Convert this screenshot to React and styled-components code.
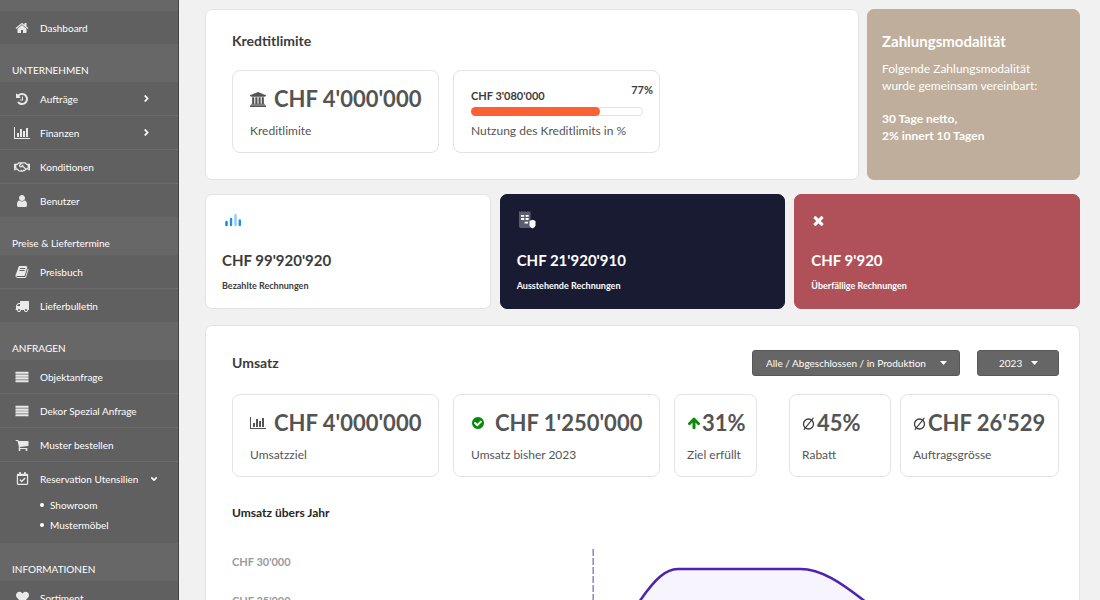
import React from 'react';
import styled, { createGlobalStyle } from 'styled-components';
import {
  FaAngleDown,
  FaAngleRight,
  FaHeart,
  FaRegCalendarCheck,
  FaRegHandshake,
} from 'react-icons/fa';

const palette = {
  sidebar: '#676767',
  item: '#606060',
  page: '#f1f1f1',
  border: '#e3e3e3',
  text: '#3c3c3c',
  value: '#545454',
  muted: '#9b9b9b',
  orange: '#fb6233',
  green: '#0a8a0a',
  navy: '#181b32',
  red: '#b05159',
  sand: '#beae9b',
  purple: '#4b24b4',
};

const GlobalStyle = createGlobalStyle`
  * {
    box-sizing: border-box;
  }
  body {
    margin: 0;
    background: ${palette.page};
    color: ${palette.text};
    font-family: Lato, 'Open Sans', sans-serif;
    font-size: 12px;
  }
  h2, h3, p, ul {
    margin: 0;
    padding: 0;
  }
  ul {
    list-style: none;
  }
`;

/* icons */

const paths = {
  home:
    'M1472 992v480q0 26-19 45t-45 19h-384v-384h-256v384h-384q-26 0-45-19t-19-45v-480q0-1 .5-3t.5-3l575-474 575 474q1 2 1 6zm223-69l-62 74q-8 9-21 11h-3q-13 0-21-7l-692-577-692 577q-12 8-24 7-13-2-21-11l-62-74q-8-10-7-23.5t11-21.5l719-599q32-26 76-26t76 26l244 204v-195q0-14 9-23t23-9h192q14 0 23 9t9 23v408l219 182q10 8 11 21.5t-7 23.5z',
  history:
    'M1664 896q0 156-61 298t-164 245-245 164-298 61q-172 0-327-72.5t-264-204.5q-7-10-6.5-22.5t8.5-20.5l137-138q10-9 25-9 16 2 23 12 73 95 179 147t225 52q104 0 198.5-40.5t163.5-109.5 109.5-163.5 40.5-198.5-40.5-198.5-109.5-163.5-163.5-109.5-198.5-40.5q-98 0-188 35.5t-160 101.5l137 138q31 30 14 69-17 40-59 40h-448q-26 0-45-19t-19-45v-448q0-42 40-59 39-17 69 14l130 129q107-101 244.5-156.5t284.5-55.5q156 0 298 61t245 164 164 245 61 298zm-640-288v448q0 14-9 23t-23 9h-320q-14 0-23-9t-9-23v-64q0-14 9-23t23-9h224v-352q0-14 9-23t23-9h64q14 0 23 9t9 23z',
  chart:
    'M640 896v512h-256v-512h256zm384-512v1024h-256v-1024h256zm1024 1152v128h-2048v-1536h128v1408h1920zm-640-896v768h-256v-768h256zm384-384v1152h-256v-1152h256z',
  user:
    'M1536 1399q0 109-62.5 187t-150.5 78h-854q-88 0-150.5-78t-62.5-187q0-85 8.5-160.5t31.5-152 58.5-131 94-89 134.5-34.5q131 128 313 128t313-128q76 0 134.5 34.5t94 89 58.5 131 31.5 152 8.5 160.5zm-256-887q0 159-112.5 271.5t-271.5 112.5-271.5-112.5-112.5-271.5 112.5-271.5 271.5-112.5 271.5 112.5 112.5 271.5z',
  book:
    'M1703 478q40 57 18 129l-275 906q-19 64-76.5 107.5t-122.5 43.5h-923q-77 0-148.5-53.5t-99.5-131.5q-24-67-2-127 0-4 3-27t4-37q1-8-3-21.5t-3-19.5q2-11 8-21t16.5-23.5 16.5-23.5q23-38 45-91.5t30-91.5q3-10 .5-30t-.5-28q3-11 17-28t17-23q21-36 42-92t25-90q1-9-2.5-32t.5-28q4-13 22-30.5t22-22.5q19-26 42.5-84.5t27.5-96.5q1-8-3-25.5t-2-26.5q2-8 9-18t18-23 17-21q8-12 16.5-30.5t15-35 16-36 19.5-32 26.5-23.5 36-11.5 47.5 5.5l-1 3q38-9 51-9h761q74 0 114 56t18 130l-274 906q-36 119-71.5 153.5t-128.5 34.5h-869q-27 0-38 15-11 16-1 43 24 70 144 70h923q29 0 56-15.5t35-41.5l300-987q7-22 5-57 38 15 59 43zm-1064 2q-4 13 2 22.5t20 9.5h608q13 0 25.5-9.5t16.5-22.5l21-64q4-13-2-22.5t-20-9.5h-608q-13 0-25.5 9.5t-16.5 22.5zm-83 256q-4 13 2 22.5t20 9.5h608q13 0 25.5-9.5t16.5-22.5l21-64q4-13-2-22.5t-20-9.5h-608q-13 0-25.5 9.5t-16.5 22.5z',
  truck:
    'M640 1408q0-52-38-90t-90-38-90 38-38 90 38 90 90 38 90-38 38-90zm-384-512h384v-256h-158q-13 0-22 9l-195 195q-9 9-9 22v30zm1280 512q0-52-38-90t-90-38-90 38-38 90 38 90 90 38 90-38 38-90zm256-1088v1024q0 15-4 26.5t-13.5 18.5-16.5 11.5-23.5 6-22.5 2-25.5 0-22.5-.5q0 106-75 181t-181 75-181-75-75-181h-384q0 106-75 181t-181 75-181-75-75-181h-64q-3 0-22.5.5t-25.5 0-22.5-2-23.5-6-16.5-11.5-13.5-18.5-4-26.5q0-26 19-45t45-19v-320q0-8-.5-35t0-38 2.5-34.5 6.5-37 14-30.5 22.5-30l198-198q19-19 50.5-32t58.5-13h160v-192q0-26 19-45t45-19h1024q26 0 45 19t19 45z',
  list:
    'M64 216h1664v270H64zm0 363h1664v270H64zm0 363h1664v270H64zm0 363h1664v270H64z',
  cart:
    'M704 1536q0 52-38 90t-90 38-90-38-38-90 38-90 90-38 90 38 38 90zm896 0q0 52-38 90t-90 38-90-38-38-90 38-90 90-38 90 38 38 90zm128-1088v512q0 24-16.5 42.5t-40.5 21.5l-1044 122q13 60 13 70 0 16-24 64h920q26 0 45 19t19 45-19 45-45 19h-1024q-26 0-45-19t-19-45q0-11 8-31.5t16-36 21.5-40 15.5-29.5l-177-823h-204q-26 0-45-19t-19-45 19-45 45-19h256q16 0 28.5 6.5t19.5 15.5 13 24.5 8 26 5.5 29.5 4.5 26h1201q26 0 45 19t19 45z',
  bank:
    'M960 0l960 384v128h-128q0 26-20.5 45t-48.5 19h-1526q-28 0-48.5-19t-20.5-45h-128v-128zm-704 640h256v768h128v-768h256v768h128v-768h256v768h128v-768h256v768h59q28 0 48.5 19t20.5 45v64h-1664v-64q0-26 20.5-45t48.5-19h59v-768zm1595 960q28 0 48.5 19t20.5 45v128h-1920v-128q0-26 20.5-45t48.5-19h1782z',
  check:
    'M1412 734q0-28-18-46l-91-90q-19-19-45-19t-45 19l-408 407-226-226q-19-19-45-19t-45 19l-91 90q-18 18-18 46 0 27 18 45l362 362q19 19 45 19 27 0 46-19l543-543q18-18 18-45zm252 162q0 209-103 385.5t-279.5 279.5-385.5 103-385.5-103-279.5-279.5-103-385.5 103-385.5 279.5-279.5 385.5-103 385.5 103 279.5 279.5 103 385.5z',
  up:
    'M1675 971q0 51-37 90l-75 75q-38 38-91 38-54 0-90-38l-294-293v704q0 52-37.5 84.5t-90.5 32.5h-128q-53 0-90.5-32.5t-37.5-84.5v-704l-294 293q-36 38-90 38t-90-38l-75-75q-38-38-38-90 0-53 38-91l651-651q35-37 90-37 54 0 91 37l651 651q37 39 37 91z',
  times:
    'M1490 1322q0 40-28 68l-136 136q-28 28-68 28t-68-28l-294-294-294 294q-28 28-68 28t-68-28l-136-136q-28-28-28-68t28-68l294-294-294-294q-28-28-28-68t28-68l136-136q28-28 68-28t68 28l294 294 294-294q28-28 68-28t68 28l136 136q28 28 28 68t-28 68l-294 294 294 294q28 28 28 68z',
};

const Icon = ({ name, size = 14, wide, color = 'currentColor' }) => {
  const box = wide || 1792;
  return (
    <svg
      width={Math.round((size * box) / 1792)}
      height={size}
      viewBox={`0 0 ${box} 1792`}
      fill={color}
      aria-hidden="true"
    >
      <path d={paths[name]} />
    </svg>
  );
};

const AverageIcon = () => (
  <svg width="13" height="16" viewBox="0 0 13 16" fill="none" stroke="#3c3c3c" aria-hidden="true">
    <circle cx="6.5" cy="9" r="5" strokeWidth="1.3" />
    <path d="M1.800 14.800L11.400 2.800" strokeWidth="1.1" />
  </svg>
);

const BarsIcon = () => (
  <svg width="18" height="18" viewBox="0 0 18 18" strokeWidth="2.4" strokeLinecap="round" aria-hidden="true">
    <path d="M2.5 11v3" stroke="#1c7fc4" />
    <path d="M7 8v6" stroke="#2490d8" />
    <path d="M11.5 4v10" stroke="#8dcbf6" />
    <path d="M15.8 9.500v4.500" stroke="#2490d8" />
  </svg>
);

const InvoiceIcon = () => (
  <svg width="18" height="18" viewBox="0 0 18 18" aria-hidden="true">
    <path d="M0 0l1.500 1L3 0l1.500 1L6 0l1.500 1L9 0l1.500 1L11.500 0v17H2Q0 17 0 15z" fill="#5a5c70" />
    <path d="M2 4.800h3.200M6.600 4.800h3M2 8h3.200M6.600 8h3M5.600 11.600h3.400" stroke="#fff" strokeWidth="1.8" />
    <path d="M10.500 10l3-1.300 3 1.300v4.300q0 2-3 3.200-3-1.200-3-3.200z" fill="#fff" />
  </svg>
);

/* page shell */

const Layout = styled.div`
  display: flex;
  height: 100vh;
  overflow: hidden;
`;

const Sidebar = styled.nav`
  flex: 0 0 179px;
  padding-top: 11px;
  overflow: hidden;
  background: ${palette.sidebar};
  border-right: 1px solid #454545;
  color: white;
  font-size: 10px;
`;

const Main = styled.main`
  flex: 1;
  min-width: 0;
  padding: 9px 20px 20px 26px;
  overflow: hidden;
`;

const NavHeading = styled.h3`
  padding: 18px 12px 4px;
  font-size: 10px;
  line-height: 16px;
  font-weight: 400;
`;

const NavList = styled.ul`
  background: ${palette.item};
`;

const NavItem = styled.li`
  & + & {
    border-top: 1px solid #6b6b6b;
  }
`;

const NavLink = styled.a`
  display: flex;
  align-items: center;
  height: 33px;
  padding-left: 12px;
  color: white;
  text-decoration: none;
  white-space: nowrap;
`;

const NavIcon = styled.span`
  display: flex;
  justify-content: center;
  width: 20px;
  margin-right: 8px;
  color: #e9e9e9;
`;

const NavArrow = styled.span`
  display: flex;
  margin: 0 ${(props) => (props.$open ? 19 : 26)}px 0 auto;
`;

const SubList = styled.ul`
  padding: 0 0 8px 40px;
`;

const SubItem = styled.li`
  a {
    display: flex;
    align-items: center;
    gap: 6px;
    line-height: 20px;
    color: white;
    text-decoration: none;
  }
  a::before {
    content: '';
    width: 4px;
    height: 4px;
    border-radius: 50%;
    background: white;
  }
`;

/* cards */

const Card = styled.section`
  background: white;
  border: 1px solid ${palette.border};
  border-radius: 7px;
`;

const TopRow = styled.div`
  display: grid;
  grid-template-columns: 1fr 213px;
  gap: 8px;
  margin-bottom: 14px;
`;

const LimitCard = styled(Card)`
  padding: 21px 26px 26px;
`;

const CardTitle = styled.h2`
  font-size: 14px;
  line-height: 20px;
  font-weight: 700;
`;

const LimitTitle = styled(CardTitle)`
  margin-bottom: 19px;
`;

const PaymentCard = styled(Card)`
  padding: 21px 14px;
  background: ${palette.sand};
  border-color: ${palette.sand};
  color: white;
  line-height: 17px;

  h2 {
    font-size: 15px;
  }
  p {
    margin-top: 9px;
  }
  p + p {
    margin-top: 16px;
    font-weight: 700;
  }
`;

const StatRow = styled.div`
  display: flex;
  gap: ${(props) => props.$gap || 14}px;
`;

const StatBox = styled.div`
  flex: 0 0 ${(props) => props.$width}px;
  height: 83px;
  padding: 14px 6px 0 ${(props) => (props.$tight ? 12 : 17)}px;
  border: 1px solid ${palette.border};
  border-radius: 8px;
  white-space: nowrap;
`;

const StatValue = styled.div`
  display: flex;
  align-items: center;
  gap: ${(props) => props.$gap}px;
  line-height: 28px;
  font-size: 22px;
  font-weight: 700;
  color: ${palette.value};
`;

const StatLabel = styled.div`
  margin-top: ${(props) => (props.$close ? 6 : 9)}px;
  line-height: 18px;
  color: #555;
`;

const UsageHead = styled.div`
  display: flex;
  justify-content: space-between;
  align-items: flex-start;
  height: 22px;
  font-size: 11px;
  line-height: 10px;
  font-weight: 700;

  span:first-child {
    align-self: center;
  }
`;

const Progress = styled.div`
  height: 9px;
  margin-right: 10px;
  border-radius: 5px;
  box-shadow: inset 0 0 0 1px ${palette.border};
`;

const ProgressFill = styled.div`
  height: 100%;
  border-radius: 5px;
  background: ${palette.orange};
`;

const InvoiceRow = styled.div`
  display: grid;
  grid-template-columns: repeat(3, 1fr);
  gap: 9px;
  margin-bottom: 16px;
`;

const InvoiceCard = styled(Card)`
  padding: 15px 16px 14px;
  background: ${(props) => props.$bg || 'white'};
  border-color: ${(props) => props.$bg || palette.border};
  color: ${(props) => (props.$bg ? 'white' : palette.text)};
`;

const InvoiceIconBox = styled.div`
  display: flex;
  align-items: center;
  height: 20px;
  padding-left: ${(props) => props.$indent || 0}px;
`;

const InvoiceValue = styled.div`
  margin-top: 20px;
  font-size: 15px;
  line-height: 20px;
  font-weight: 700;
`;

const InvoiceLabel = styled.div`
  margin-top: 8px;
  font-size: 9px;
  line-height: 16px;
  font-weight: 700;
`;

const RevenueCard = styled(Card)`
  padding: 24px 20px 26px 26px;
`;

const RevenueHead = styled.div`
  display: flex;
  align-items: center;
  margin-bottom: 18px;

  h2 {
    margin-right: auto;
  }
`;

const SelectWrapper = styled.div`
  position: relative;
  width: ${(props) => props.$width}px;
  margin-left: 17px;

  svg {
    position: absolute;
    top: 11px;
    right: ${(props) => props.$caret}px;
    pointer-events: none;
  }
`;

const Select = styled.select`
  display: block;
  width: 100%;
  height: 26px;
  padding: 0 0 0 ${(props) => props.$indent}px;
  appearance: none;
  border: 1px solid #585858;
  border-radius: 3px;
  background: #666;
  color: white;
  font-family: inherit;
  font-size: 10px;
`;

const SplitRow = styled.div`
  display: flex;
  justify-content: space-between;
`;

/* chart */

const ChartTitle = styled.h3`
  margin-top: 26px;
  font-size: 12px;
  line-height: 20px;
  color: #262626;
`;

const Chart = styled.div`
  display: flex;
  margin-top: 26px;
`;

const Axis = styled.ul`
  flex: 0 0 68px;
  padding-top: 4px;
  color: ${palette.muted};
  font-size: 11px;
  font-weight: 700;
  line-height: 18px;

  li {
    margin-bottom: 21px;
  }
`;

const Plot = styled.svg`
  flex: 1;
  min-width: 0;
  height: 240px;
`;

const Caret = () => (
  <svg width="7" height="4" viewBox="0 0 8 5" preserveAspectRatio="none" fill="#fff" aria-hidden="true">
    <path d="M0 0h8L4 5z" />
  </svg>
);

const Dropdown = ({ label, options, width, caret, indent }) => (
  <SelectWrapper $width={width} $caret={caret}>
    <Select aria-label={label} $indent={indent}>
      {options.map((option) => (
        <option key={option}>{option}</option>
      ))}
    </Select>
    <Caret />
  </SelectWrapper>
);

const menu = [
  { items: [{ text: 'Dashboard', icon: <Icon name="home" /> }] },
  {
    title: 'UNTERNEHMEN',
    items: [
      { text: 'Aufträge', icon: <Icon name="history" />, arrow: true },
      { text: 'Finanzen', icon: <Icon name="chart" wide={2048} />, arrow: true },
      { text: 'Konditionen', icon: <FaRegHandshake size={16} /> },
      { text: 'Benutzer', icon: <Icon name="user" /> },
    ],
  },
  {
    title: 'Preise & Liefertermine',
    items: [
      { text: 'Preisbuch', icon: <Icon name="book" /> },
      { text: 'Lieferbulletin', icon: <Icon name="truck" /> },
    ],
  },
  {
    title: 'ANFRAGEN',
    items: [
      { text: 'Objektanfrage', icon: <Icon name="list" /> },
      { text: 'Dekor Spezial Anfrage', icon: <Icon name="list" /> },
      { text: 'Muster bestellen', icon: <Icon name="cart" /> },
      {
        text: 'Reservation Utensilien',
        icon: <FaRegCalendarCheck size={13} />,
        children: ['Showroom', 'Mustermöbel'],
      },
    ],
  },
  {
    title: 'INFORMATIONEN',
    items: [{ text: 'Sortiment', icon: <FaHeart size={13} /> }],
  },
];

const MenuEntry = ({ item }) => (
  <NavItem>
    <NavLink href="#">
      <NavIcon>{item.icon}</NavIcon>
      {item.text}
      {item.arrow && (
        <NavArrow>
          <FaAngleRight size={11} />
        </NavArrow>
      )}
      {item.children && (
        <NavArrow $open>
          <FaAngleDown size={10} />
        </NavArrow>
      )}
    </NavLink>
    {item.children && (
      <SubList>
        {item.children.map((child) => (
          <SubItem key={child}>
            <a href="#">{child}</a>
          </SubItem>
        ))}
      </SubList>
    )}
  </NavItem>
);

const Stat = ({ width, tight, gap = 8, icon, value, label }) => (
  <StatBox $width={width} $tight={tight}>
    <StatValue $gap={gap}>
      {icon}
      {value}
    </StatValue>
    <StatLabel>{label}</StatLabel>
  </StatBox>
);

const Invoice = ({ bg, icon, indent, value, label }) => (
  <InvoiceCard $bg={bg}>
    <InvoiceIconBox $indent={indent}>{icon}</InvoiceIconBox>
    <InvoiceValue>{value}</InvoiceValue>
    <InvoiceLabel>{label}</InvoiceLabel>
  </InvoiceCard>
);

const RevenueChart = () => (
  <Chart>
    <Axis>
      {["CHF 30'000", "CHF 25'000", "CHF 20'000", "CHF 15'000"].map((tick) => (
        <li key={tick}>{tick}</li>
      ))}
    </Axis>
    <Plot viewBox="300 549 760 240" preserveAspectRatio="none" role="img" aria-label="Umsatz übers Jahr">
      <path d="M593.5 549V789" stroke="#5a45a8" strokeDasharray="7 2" vectorEffect="non-scaling-stroke" />
      <path
        d="M560 789C600 700 620 632 641 600C656 578 667 569 678 569H801C822 569 842 583 864 600C900 630 940 700 980 789"
        fill="#f7f4fe"
        stroke={palette.purple}
        strokeWidth="2.5"
        vectorEffect="non-scaling-stroke"
      />
    </Plot>
  </Chart>
);

const App = () => {
  const usage = 75;
  return (
    <Layout>
      <GlobalStyle />
      <Sidebar>
        {menu.map((group, index) => (
          <React.Fragment key={index}>
            {group.title && <NavHeading>{group.title}</NavHeading>}
            <NavList>
              {group.items.map((item) => (
                <MenuEntry item={item} key={item.text} />
              ))}
            </NavList>
          </React.Fragment>
        ))}
      </Sidebar>
      <Main>
        <TopRow>
          <LimitCard>
            <LimitTitle>Kredtitlimite</LimitTitle>
            <StatRow>
              <Stat width={207} icon={<Icon name="bank" size={15} wide={1920} />} value="CHF 4'000'000" label="Kreditlimite" />
              <StatBox $width={207}>
                <UsageHead>
                  <span>CHF 3'080'000</span>
                  <span>77%</span>
                </UsageHead>
                <Progress>
                  <ProgressFill style={{ width: `${usage}%` }} />
                </Progress>
                <StatLabel $close>Nutzung des Kreditlimits in %</StatLabel>
              </StatBox>
            </StatRow>
          </LimitCard>
          <PaymentCard>
            <CardTitle>Zahlungsmodalität</CardTitle>
            <p>
              Folgende Zahlungsmodalität
              <br />
              wurde gemeinsam vereinbart:
            </p>
            <p>
              30 Tage netto,
              <br />
              2% innert 10 Tagen
            </p>
          </PaymentCard>
        </TopRow>

        <InvoiceRow>
          <Invoice icon={<BarsIcon />} indent={2} value="CHF 99'920'920" label="Bezahlte Rechnungen" />
          <Invoice bg={palette.navy} icon={<InvoiceIcon />} indent={2} value="CHF 21'920'910" label="Ausstehende Rechnungen" />
          <Invoice bg={palette.red} icon={<Icon name="times" size={15} />} value="CHF 9'920" label="Überfällige Rechnungen" />
        </InvoiceRow>

        <RevenueCard>
          <RevenueHead>
            <CardTitle>Umsatz</CardTitle>
            <Dropdown
              label="Status"
              options={['Alle / Abgeschlossen / in Produktion']}
              width={208}
              caret={13}
              indent={13}
            />
            <Dropdown label="Jahr" options={['2023', '2022']} width={82} caret={21} indent={21} />
          </RevenueHead>
          <SplitRow>
            <StatRow>
              <Stat width={207} icon={<Icon name="chart" wide={2048} />} value="CHF 4'000'000" label="Umsatzziel" />
              <Stat
                width={207}
                gap={10}
                icon={<Icon name="check" color={palette.green} />}
                value="CHF 1'250'000"
                label="Umsatz bisher 2023"
              />
              <Stat width={83} tight gap={1} icon={<Icon name="up" color={palette.green} />} value="31%" label="Ziel erfüllt" />
            </StatRow>
            <StatRow $gap={9}>
              <Stat width={102} tight gap={2} icon={<AverageIcon />} value="45%" label="Rabatt" />
              <Stat width={159} tight gap={2} icon={<AverageIcon />} value="CHF 26'529" label="Auftragsgrösse" />
            </StatRow>
          </SplitRow>
          <ChartTitle>Umsatz übers Jahr</ChartTitle>
          <RevenueChart />
        </RevenueCard>
      </Main>
    </Layout>
  );
};

export default App;
